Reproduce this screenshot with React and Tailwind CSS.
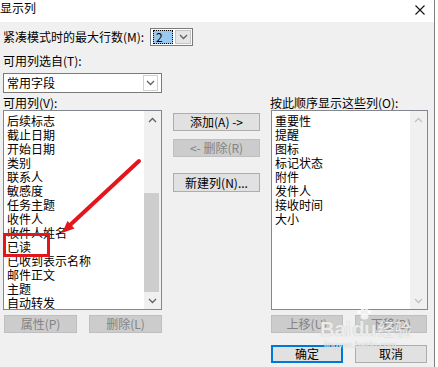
import React from "react";

const LEFT_ITEMS = [
  "后续标志",
  "截止日期",
  "开始日期",
  "类别",
  "联系人",
  "敏感度",
  "任务主题",
  "收件人",
  "收件人姓名",
  "已读",
  "已收到表示名称",
  "邮件正文",
  "主题",
  "自动转发",
];

const RIGHT_ITEMS = ["重要性", "提醒", "图标", "标记状态", "附件", "发件人", "接收时间", "大小"];

function Chevron({ up, color = "#606060" }) {
  return (
    <svg width="9" height="6" viewBox="0 0 9 6">
      <path
        d={up ? "M1 5 L4.5 1.5 L8 5" : "M1 1 L4.5 4.5 L8 1"}
        fill="none"
        stroke={color}
        strokeWidth="1.3"
      />
    </svg>
  );
}

function Btn({ children, disabled, primary, className = "" }) {
  let tone = "bg-[#e1e1e1] border border-[#adadad] text-black";
  if (disabled) tone = "bg-[#cccccc] border border-[#bfbfbf] text-[#838383]";
  if (primary) tone = "bg-[#e1e1e1] border-2 border-[#0078d7] text-black";
  return (
    <div className={`flex items-center justify-center whitespace-nowrap ${tone} ${className}`}>
      {children}
    </div>
  );
}

function ListBox({ items, thumb }) {
  const arrow = thumb ? "#606060" : "#c2c2c2";
  return (
    <div className="h-[200px] bg-white border border-[#828790] flex">
      <div className="flex-1 overflow-hidden pt-[3px] pl-[3px]">
        {items.map((t) => (
          <div key={t} className="h-[14px] leading-[14px] whitespace-nowrap">
            {t}
          </div>
        ))}
      </div>
      <div className="w-[17px] bg-[#f0f0f0] flex flex-col">
        <div className="h-[17px] flex items-center justify-center">
          <Chevron up color={arrow} />
        </div>
        <div className="flex-1 flex flex-col justify-end">
          {thumb && <div className="h-[99px] mr-[2px] bg-[#cdcdcd]"></div>}
        </div>
        <div className="h-[17px] flex items-center justify-center">
          <Chevron color={arrow} />
        </div>
      </div>
    </div>
  );
}

export default function App() {
  return (
    <div className="relative w-[438px] h-[367px] flex bg-white overflow-hidden text-[12px] leading-[14px] text-black font-['Noto_Sans_CJK_SC','Noto_Sans',sans-serif]">
      <div className="w-[434px] flex flex-col">
        {/* title bar */}
        <div className="h-[22px] bg-white flex justify-between">
          <div className="pt-[1px] text-[12px] leading-[14px]">显示列</div>
          <svg width="10" height="10" viewBox="0 0 10 10" className="mt-[5px] mr-[9px]">
            <path d="M0.5 0.5 L9.5 9.5 M9.5 0.5 L0.5 9.5" stroke="#111" strokeWidth="1.1" />
          </svg>
        </div>

        <div className="flex-1 bg-[#f0f0f0] pl-[3px] pt-[6px] flex flex-col">
          <div className="h-[18px] flex items-center">
            <div className="w-[147px] whitespace-nowrap">紧凑模式时的最大行数(M):</div>
            <div className="w-[43px] h-[18px] bg-white border border-[#7a7a7a] flex items-center pl-[2px] pr-px gap-[2px]">
              <div className="w-[20px] h-[14px] bg-[#99c9ef] border border-dotted border-black leading-[12px] pl-[2px]">
                2
              </div>
              <div className="w-[16px] h-[14px] bg-[#e5e5e5] border border-[#c4c4c4] flex items-center justify-center">
                <Chevron />
              </div>
            </div>
          </div>

          <div className="mt-[7px] h-[15px] leading-[15px]">可用列选自(T):</div>

          <div className="mt-[5px] w-[159px] h-[20px] bg-white border border-[#7a7a7a] flex items-center justify-between pl-[3px] pr-[3px]">
            <span>常用字段</span>
            <div className="w-[15px] h-[16px] border border-[#d0d0d0] flex items-center justify-center">
              <Chevron />
            </div>
          </div>

          <div className="mt-[3px] flex">
            {/* left column */}
            <div className="w-[159px] flex flex-col">
              <div className="h-[14px] leading-[14px]">可用列(V):</div>
              <ListBox items={LEFT_ITEMS} thumb />
              <div className="mt-[5px] h-[18px] flex justify-between pl-px">
                <Btn disabled className="w-[73px] h-[18px]">属性(P)</Btn>
                <Btn disabled className="w-[73px] h-[18px]">删除(L)</Btn>
              </div>
            </div>

            {/* middle column */}
            <div className="w-[87px] ml-[11px] pt-[17px] flex flex-col">
              <Btn className="h-[18px]">添加(A) -&gt;</Btn>
              <Btn disabled className="mt-[8px] h-[18px]">&lt;- 删除(R)</Btn>
              <Btn className="mt-[16px] h-[19px]">新建列(N)...</Btn>
            </div>

            {/* right column */}
            <div className="w-[157px] ml-[11px] flex flex-col">
              <div className="h-[14px] leading-[14px] -ml-px">按此顺序显示这些列(O):</div>
              <ListBox items={RIGHT_ITEMS} />
              <div className="mt-[5px] h-[18px] flex justify-between pr-px">
                <Btn disabled className="w-[72px] h-[18px]">上移(U)</Btn>
                <Btn disabled className="w-[72px] h-[18px]">下移(D)</Btn>
              </div>
              <div className="mt-[12px] h-[18px] flex justify-between pr-px">
                <Btn primary className="w-[72px] h-[18px]">确定</Btn>
                <Btn className="w-[72px] h-[18px]">取消</Btn>
              </div>
            </div>
          </div>
        </div>
      </div>
      <div className="w-px bg-[#7f7f7f]"></div>
      <div className="w-[3px] bg-white"></div>

      {/* watermark */}
      <div className="absolute left-[320px] top-[318px] text-white/75 pointer-events-none [text-shadow:0_0_1px_#b0b0b0]">
        <div className="flex items-end gap-[1px] font-bold text-[20px] leading-[22px] font-['Liberation_Sans',sans-serif]">
          <span>Bai</span>
          <span className="relative">
            du
            <svg width="16" height="14" viewBox="0 0 16 14" className="absolute left-[4px] -top-[12px]">
              <circle cx="3" cy="6" r="2" fill="white" fillOpacity="0.75" />
              <circle cx="6.5" cy="2.5" r="2" fill="white" fillOpacity="0.75" />
              <circle cx="10.5" cy="2.5" r="2" fill="white" fillOpacity="0.75" />
              <circle cx="13.5" cy="6" r="2" fill="white" fillOpacity="0.75" />
              <ellipse cx="8.5" cy="10.5" rx="4" ry="3" fill="white" fillOpacity="0.75" />
            </svg>
          </span>
          <span className="text-[17px] font-normal font-['Noto_Sans_CJK_SC',sans-serif]">经验</span>
        </div>
        <div className="text-[9px] leading-[10px] ml-[4px] font-['Liberation_Sans',sans-serif]">
          jingyan.baidu.com
        </div>
      </div>

      {/* red annotation */}
      <svg className="absolute left-0 top-0 pointer-events-none" width="438" height="367">
        <path d="M139 161 L69 226" stroke="#e3161e" strokeWidth="4" strokeLinecap="round" />
        <polygon points="62,233 74.5,228.5 67.5,221" fill="#e3161e" />
        <rect x="4.5" y="234.5" width="44" height="21" fill="none" stroke="#e3161e" strokeWidth="3" />
      </svg>
    </div>
  );
}
